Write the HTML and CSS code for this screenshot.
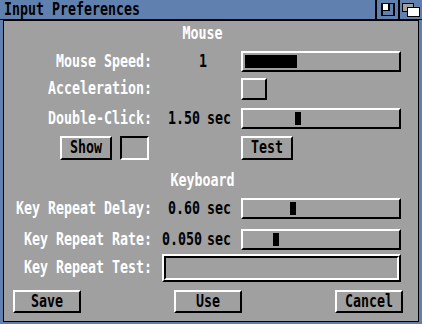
FILE: index.html
```html
<!DOCTYPE html>
<html lang="en">
<head>
    <meta charset="UTF-8">
    <title>Input Preferences</title>
    <link rel="stylesheet" href="styles.css">
</head>
<body>
    <div class="window">
        <div class="titlebar">
            <span class="title txt">Input Preferences</span>
            <div class="gadget">
                <svg width="14" height="13" viewBox="0 0 14 13">
                    <rect x="0" y="0" width="14" height="13" fill="#000"/>
                    <rect x="2" y="1" width="10" height="11" fill="#6080b0"/>
                    <rect x="2" y="1" width="5" height="6" fill="#fff"/>
                    <rect x="7" y="1" width="2" height="7" fill="#000"/>
                    <rect x="2" y="7" width="7" height="1" fill="#000"/>
                </svg>
            </div>
            <div class="gadget">
                <svg width="18" height="14" viewBox="0 0 18 14">
                    <rect x="0.5" y="0.5" width="11" height="8" fill="#a0a0a0" stroke="#000"/>
                    <rect x="5.5" y="4.5" width="12" height="9" fill="#fff" stroke="#000"/>
                </svg>
            </div>
        </div>

        <div class="body">
            <div class="heading"><span class="txt">Mouse</span></div>

            <div class="row row-speed">
                <span class="label txt">Mouse Speed:</span>
                <div class="value"><span class="num txt speed-num">1</span></div>
                <div class="slider"><div class="knob" style="margin-left:0;width:52px"></div></div>
            </div>

            <div class="row row-accel">
                <span class="label txt">Acceleration:</span>
                <div class="value"></div>
                <div><div class="checkbox"></div></div>
            </div>

            <div class="row row-dbl">
                <span class="label txt">Double-Click:</span>
                <div class="value"><span class="num txt">1.50</span><span class="unit txt">sec</span></div>
                <div class="slider"><div class="knob" style="margin-left:50px"></div></div>
            </div>

            <div class="row row-show">
                <div class="show-group">
                    <button class="btn btn-small"><span class="txt">Show</span></button>
                    <div class="well"></div>
                </div>
                <div class="value"></div>
                <div><button class="btn btn-small"><span class="txt">Test</span></button></div>
            </div>

            <div class="heading heading-kbd"><span class="txt">Keyboard</span></div>

            <div class="row row-delay">
                <span class="label txt">Key Repeat Delay:</span>
                <div class="value"><span class="num txt">0.60</span><span class="unit txt">sec</span></div>
                <div class="slider"><div class="knob" style="margin-left:45px"></div></div>
            </div>

            <div class="row row-rate">
                <span class="label txt">Key Repeat Rate:</span>
                <div class="value"><span class="num txt">0.050</span><span class="unit txt">sec</span></div>
                <div class="slider"><div class="knob" style="margin-left:28px"></div></div>
            </div>

            <div class="row row-test">
                <span class="label txt">Key Repeat Test:</span>
                <div class="string"><div class="string-inner"></div></div>
            </div>

            <div class="actions">
                <button class="btn btn-wide"><span class="txt">Save</span></button>
                <button class="btn btn-wide"><span class="txt">Use</span></button>
                <button class="btn btn-wide"><span class="txt">Cancel</span></button>
            </div>
        </div>
    </div>
</body>
</html>
```

FILE: styles.css
```css
:root {
    --blue: #6080b0;
    --gray: #a0a0a0;
    --hi: #ffffff;
    --lo: #000000;
}

body {
    margin: 0;
    background: var(--gray);
    font-family: 'DejaVu Sans Mono', monospace;
    font-weight: bold;
    font-size: 13.3px;
}

.window {
    width: 422px;
    height: 324px;
    background: var(--blue);
    overflow: hidden;
}

/* Amiga topaz look: narrow and tall */
.txt {
    display: inline-block;
    transform: scaleY(1.3);
    line-height: 14px;
}

.titlebar {
    height: 19px;
    border-bottom: 1px solid var(--lo);
    display: flex;
    align-items: center;
}

.title {
    flex: 1;
    padding-left: 4px;
    color: #000;
}

.gadget {
    height: 19px;
    border-left: 2px solid var(--lo);
    display: flex;
    align-items: center;
    justify-content: center;
}

.gadget:nth-child(2) { width: 21px; }
.gadget:nth-child(3) { width: 22px; }

.body {
    height: 300px;
    margin: 0 3px;
    border: 1px solid var(--lo);
    background: var(--gray);
    color: var(--hi);
}

.heading {
    width: 397px;
    height: 25px;
    display: flex;
    align-items: center;
    justify-content: center;
}

.heading-kbd {
    height: 24px;
    margin-top: 9px;
}

.row {
    display: grid;
    grid-template-columns: 148px 69px 160px;
    column-gap: 10px;
    align-items: center;
}

.row-speed { height: 21px; margin-top: 5px; }
.row-accel { height: 22px; margin-top: 6px; }
.row-dbl   { height: 21px; margin-top: 8px; }
.row-show  { height: 24px; margin-top: 7px; }
.row-delay { height: 21px; margin-top: 5px; }
.row-rate  { height: 21px; margin-top: 10px; }
.row-test  { height: 28px; margin-top: 4px; }

.label {
    justify-self: end;
    white-space: nowrap;
}

.value {
    display: flex;
    color: #000;
}

.num {
    width: 38px;
    text-align: right;
    white-space: nowrap;
}

.speed-num {
    margin-left: 37px;
    text-align: left;
}

.unit {
    margin-left: 7px;
}

.slider {
    box-sizing: border-box;
    height: 21px;
    padding: 2px;
    border: 2px solid;
    border-color: var(--hi) var(--lo) var(--lo) var(--hi);
    display: flex;
}

.knob {
    width: 6px;
    background: #000;
}

.checkbox {
    box-sizing: border-box;
    width: 26px;
    height: 22px;
    border: 2px solid;
    border-color: var(--hi) var(--lo) var(--lo) var(--hi);
}

.show-group {
    display: flex;
    justify-content: flex-end;
    gap: 8px;
    padding-right: 3px;
}

.well {
    box-sizing: border-box;
    width: 29px;
    height: 24px;
    border: 2px solid;
    border-color: var(--lo) var(--hi) var(--hi) var(--lo);
}

.btn {
    box-sizing: border-box;
    height: 24px;
    padding: 0;
    margin: 0;
    background: var(--gray);
    color: #000;
    border: 2px solid;
    border-color: var(--hi) var(--lo) var(--lo) var(--hi);
    font: inherit;
    display: flex;
    align-items: center;
    justify-content: center;
}

.btn-small { width: 52px; }
.btn-wide  { width: 68px; height: 23px; }

.string {
    grid-column: 2 / 4;
    box-sizing: border-box;
    height: 28px;
    border: 2px solid;
    border-color: var(--hi) var(--lo) var(--lo) var(--hi);
}

.string-inner {
    box-sizing: border-box;
    height: 100%;
    border: 2px solid;
    border-color: var(--lo) var(--hi) var(--hi) var(--lo);
}

.actions {
    display: flex;
    justify-content: space-between;
    margin-top: 8px;
    padding: 0 15px 0 9px;
}
```
